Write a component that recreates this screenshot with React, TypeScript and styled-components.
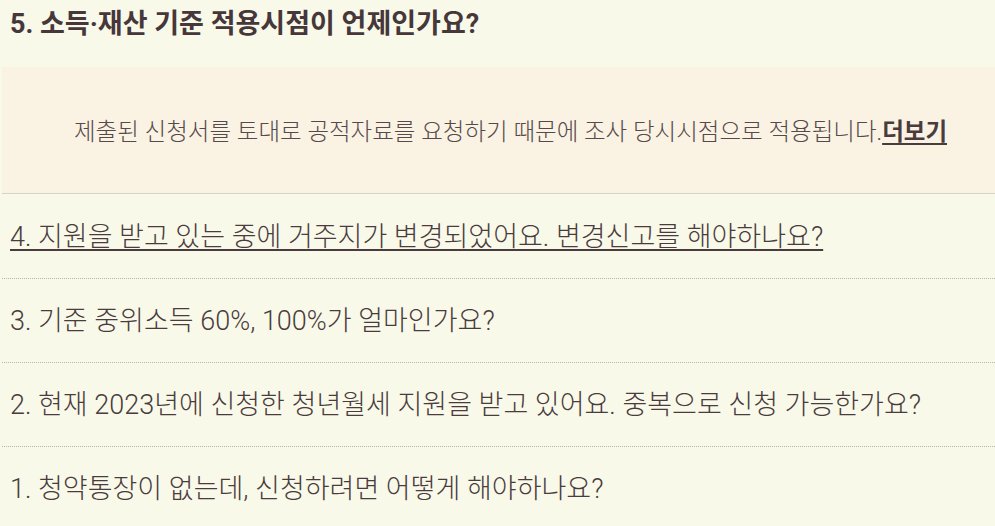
import React from "react";
import styled, { createGlobalStyle } from "styled-components";

const Global = createGlobalStyle`
  html, body { margin: 0; padding: 0; background: #f9f9e9; }
  body { font-family: "Roboto", "Noto Sans CJK KR", sans-serif; color: #4a3c3e; }
`;

const Page = styled.div`
  padding-left: 2px;
  width: 993px;
  overflow: hidden;
`;

const Title = styled.h2`
  margin: 0;
  height: 67px;
  box-sizing: border-box;
  padding: 6px 0 0 8px;
  font-size: 27px;
  font-weight: 700;
  line-height: 36px;
  color: #45373a;
`;

const Answer = styled.div`
  height: 127px;
  box-sizing: border-box;
  background: #faf3e3;
  border-bottom: 1.5px solid #d6d3cb;
  display: flex;
  align-items: center;
  padding-left: 72px;
  font-size: 23.5px;
  font-weight: 300;
  color: #56494b;
`;

const More = styled.a`
  font-weight: 700;
  color: #4a3c3e;
  text-decoration: underline;
  text-decoration-thickness: 2px;
  text-underline-offset: 3px;
`;

const List = styled.ul`
  list-style: none;
  margin: 0;
  padding: 0;
`;

const Item = styled.li<{ $active?: boolean }>`
  height: 84px;
  box-sizing: border-box;
  display: flex;
  align-items: center;
  padding: 0 0 4px 8px;
  font-size: 27px;
  font-weight: 300;
  border-top: ${(p) => (p.$active ? "none" : "1px dotted #b9b5a8")};
  text-decoration: ${(p) => (p.$active ? "underline" : "none")};
  text-decoration-thickness: 2px;
  text-underline-offset: 3px;
`;

const questions = [
  "4. 지원을 받고 있는 중에 거주지가 변경되었어요. 변경신고를 해야하나요?",
  "3. 기준 중위소득 60%, 100%가 얼마인가요?",
  "2. 현재 2023년에 신청한 청년월세 지원을 받고 있어요. 중복으로 신청 가능한가요?",
  "1. 청약통장이 없는데, 신청하려면 어떻게 해야하나요?",
];

export default function App() {
  return (
    <Page>
      <Global />
      <Title>5. 소득·재산 기준 적용시점이 언제인가요?</Title>
      <Answer>
        <span>
          제출된 신청서를 토대로 공적자료를 요청하기 때문에 조사 당시시점으로 적용됩니다.
          <More>더보기</More>
        </span>
      </Answer>
      <List>
        {questions.map((q, i) => (
          <Item key={q} $active={i === 0}>
            {q}
          </Item>
        ))}
      </List>
    </Page>
  );
}
